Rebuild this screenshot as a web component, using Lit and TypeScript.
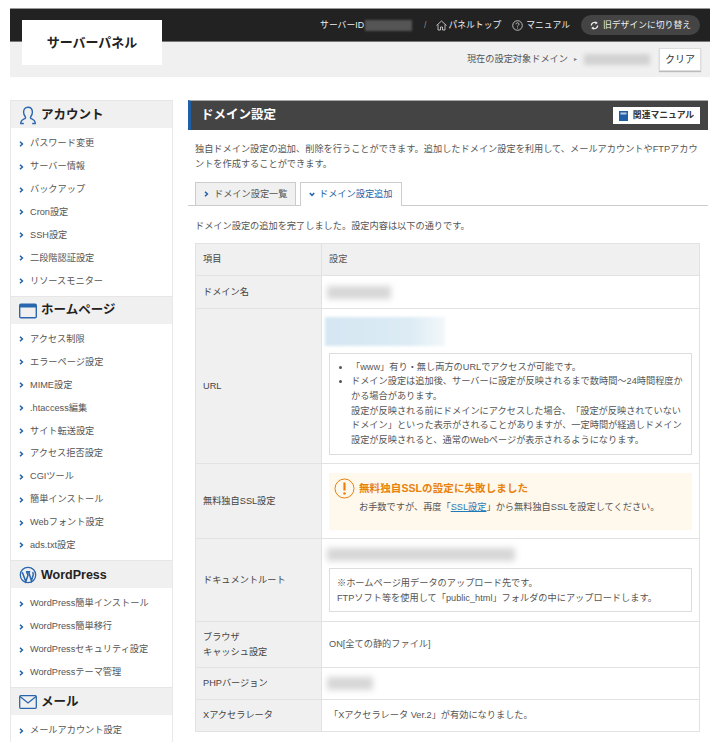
import { LitElement, html, css, svg } from "lit";
import { customElement } from "lit/decorators.js";

const chev = html`<svg class="chev" viewBox="0 0 5 6" width="5" height="6"><path d="M1 .8 3.4 3 1 5.2" fill="none" stroke="#1f5fa8" stroke-width="1.5"/></svg>`;
const down = html`<svg class="chev" viewBox="0 0 6 5" width="6" height="5"><path d="M.8 1 3 3.4 5.2 1" fill="none" stroke="#1f5fa8" stroke-width="1.5"/></svg>`;

const icons: Record<string, unknown> = {
  account: svg`<path d="M10 2.2c-3 0-4.400 2.300-4.400 5 0 2 .9 3.600 1.800 4.800.3.500.2 1.200-.4 1.500-1.400.9-3.400 1.200-4 3.300-.2.600-.2 1.200-.2 1.700h3M10 2.200c3 0 4.400 2.300 4.400 5 0 2-.9 3.600-1.800 4.800-.3.500-.2 1.200.4 1.500 1.400.9 3.400 1.200 4 3.300.2.600.2 1.200.2 1.700h-3" fill="none" stroke="#2a66ad" stroke-width="1.400"/>`,
  home: svg`<rect x="1.700" y="3.200" width="16.600" height="13.600" rx="1.200" fill="none" stroke="#2a66ad" stroke-width="1.400"/><rect x="2" y="3.500" width="16" height="3" fill="#2a66ad"/>`,
  wp: svg`<circle cx="10" cy="10" r="7.700" fill="none" stroke="#2a66ad" stroke-width="1.300"/><path d="M4.300 7.200 7.800 16.500 10 10.200 8.500 6.700M8 6.700h4.200M10.600 6.700l2.800 9 1.800-5.600c.3-1.300-.2-2.200-.6-3" fill="none" stroke="#2a66ad" stroke-width="1.500"/>`,
  mail: svg`<rect x="1.700" y="3.700" width="16.600" height="12.600" rx="1" fill="none" stroke="#2a66ad" stroke-width="1.300"/><path d="M2 4.500 10 11l8-6.500" fill="none" stroke="#2a66ad" stroke-width="1.300"/>`,
};

const menu = [
  { icon: "account", title: "アカウント", items: ["パスワード変更", "サーバー情報", "バックアップ", "Cron設定", "SSH設定", "二段階認証設定", "リソースモニター"] },
  { icon: "home", title: "ホームページ", items: ["アクセス制限", "エラーページ設定", "MIME設定", ".htaccess編集", "サイト転送設定", "アクセス拒否設定", "CGIツール", "簡単インストール", "Webフォント設定", "ads.txt設定"] },
  { icon: "wp", title: "WordPress", items: ["WordPress簡単インストール", "WordPress簡単移行", "WordPressセキュリティ設定", "WordPressテーマ管理"] },
  { icon: "mail", title: "メール", items: ["メールアカウント設定"] },
];

@customElement("app-root")
export class AppRoot extends LitElement {
  static styles = css`
    :host {
      display: block; width: 710px; height: 742px; overflow: hidden; background: #fff;
      font-family: "Liberation Sans", "Noto Sans CJK JP", sans-serif;
      font-size: 9.2px; color: #444; line-height: 15px; text-spacing-trim: space-all;
    }
    .page { padding: 8px 0 0 10px; }
    .head { position: relative; width: 700px; }
    .top {
      height: 34px; box-sizing: border-box; background: #222; border-top: 1px solid #999; border-bottom: 1px solid #777;
      display: flex; align-items: center; justify-content: flex-end; color: #eee; padding-right: 10px; font-size: 8.800px;
    }
    .logo {
      position: absolute; left: 12px; top: 12px; width: 140px; height: 45px; background: #fff;
      display: flex; align-items: center; justify-content: center;
      font-size: 13px; font-weight: 700; color: #222;
    }
    .sid { display: flex; align-items: center; }
    .blurdark { width: 47px; height: 11px; margin-left: 1px; background: #555; filter: blur(1px); }
    .slash { margin: 0 10px 0 12px; color: #888; }
    .tl { display: flex; align-items: center; gap: 1px; margin-right: 11px; }
    .tl.two { gap: 3px; }
    .sw {
      width: 119px; height: 20px; border-radius: 10px; background: #444; display: flex; align-items: center; justify-content: center; gap: 4px;
    }
    .sub {
      height: 35px; background: #f0f0f0; display: flex; align-items: center; justify-content: flex-end; color: #555; padding-right: 9px;
    }
    .arrow { margin: 0 7px 0 6px; font-size: 6px; color: #777; }
    .blurlight { width: 66px; height: 11px; background: #d2d2d2; filter: blur(2px); margin-right: 9px; }
    .clear {
      width: 42px; height: 23px; box-sizing: border-box; background: #fff; border: 1px solid #ddd; box-shadow: 0 1px 1px #bbb; color: #333;
      display: flex; align-items: center; justify-content: center; font-size: 10px;
    }
    .body { display: flex; margin-top: 23px; align-items: flex-start; }
    .side { width: 163px; box-sizing: border-box; border: 1px solid #e8e8e8; border-top: 0; flex: none; }
    .sh {
      height: 28px; background: #f0f0f0; display: flex; align-items: center; padding: 1px 0 0 7px; gap: 3px;
      font-size: 12.500px; font-weight: 700; color: #222; border-top: 1px solid #e6e6e6; box-sizing: border-box;
    }
    .sh svg { flex: none; }
    ul.nav { list-style: none; margin: 0; padding: 4.300px 0 3.200px; }
    ul.nav li { height: 22.900px; display: flex; align-items: center; gap: 6px; padding-left: 8px; color: #555; font-size: 9.200px; white-space: nowrap; }
    .chev { flex: none; }
    .main { width: 520px; margin-left: 15px; flex: none; }
    .title {
      height: 30px; box-sizing: border-box; background: #444; border-left: 3px solid #1f5fa8; border-top: 1px solid #aaa;
      display: flex; align-items: center; justify-content: space-between; padding: 0 8px 0 10px; color: #fff; font-size: 12.500px; font-weight: 700;
    }
    .rel {
      width: 87px; height: 17px; background: #fff; display: flex; align-items: center; justify-content: center; gap: 5px;
      color: #333; font-size: 8.800px; font-weight: 700;
    }
    .intro { margin: 12px 5px 0 7px; line-height: 15px; color: #555; }
    .tabs { display: flex; margin-top: 10px; padding-left: 7px; gap: 4px; border-bottom: 1px solid #ccc; height: 23px; }
    .tab {
      height: 23px; box-sizing: border-box; display: flex; align-items: center; gap: 5px; padding: 0 0 0 8px; border: 1px solid #ccc; border-bottom: 0;
      background: #f0f0f0; color: #555; width: 101px; white-space: nowrap;
    }
    .tab.on { background: #fff; height: 24px; color: #1f5fa8; width: 102px; gap: 4px; }
    .done { margin: 13px 7px 9px; color: #555; }
    table { border-collapse: collapse; width: 505px; margin-left: 7px; table-layout: fixed; }
    th, td { border: 1px solid #e2e2e2; font-weight: 400; text-align: left; padding: 0 7px; color: #555; vertical-align: middle; }
    th { width: 111px; background: #f0f0f0; color: #444; }
    td.hd { background: #f0f0f0; }
    .r1 { height: 32px; } .r2 { height: 33px; } .r3 { height: 155px; } .r4 { height: 75px; } .r5 { height: 83px; } .r6 { height: 46px; } .r7 { height: 32px; } .r8 { height: 32px; }
    .blur { height: 13px; background: #d6d6d6; filter: blur(3px); margin-left: -2px; }
    .urlb { width: 120px; height: 29px; margin-left: -4px; background: linear-gradient(90deg, #d5e6f2, #dcebf4 70%, #f2f7fa); filter: blur(1.500px); margin-bottom: 7px; }
    .note { border: 1px solid #ddd; padding: 6px 3px 7px 21px; }
    .note ul { margin: 0; padding: 0; list-style: disc; }
    .note li { line-height: 14.600px; }
    .note2 { border: 1px solid #ddd; margin: 7px 0 0 0; padding: 7px 7px; line-height: 14.500px; height: 44px; box-sizing: border-box; }
    .warn { background: #fff8ec; height: 57px; box-sizing: border-box; padding: 5px 5px; display: flex; gap: 4px; }
    .warn svg { flex: none; }
    .wt { color: #e8820e; font-weight: 700; font-size: 10.500px; line-height: 15px; margin-top: 3px; letter-spacing: .1px; }
    .wb { margin-top: 4px; color: #555; }
    a { color: #1f7ab8; text-decoration: underline; }
  `;

  render() {
    return html`<div class="page">
      <div class="head">
        <div class="top">
          <span class="sid">サーバーID<span class="blurdark"></span></span>
          <span class="slash">/</span>
          <span class="tl"><svg width="11" height="11" viewBox="0 0 11 11"><path d="M.5 5.500 5.500 1l5 4.500M2 4.500V10h2.500V7h2v3H9V4.500" fill="none" stroke="#ddd" stroke-width=".8"/></svg>パネルトップ</span>
          <span class="tl two"><svg width="11" height="11" viewBox="0 0 11 11"><circle cx="5.500" cy="5.500" r="4.800" fill="none" stroke="#ddd" stroke-width=".8"/><path d="M4 4.300c0-2 3-2 3 0 0 1-1.500 1-1.500 2.200" fill="none" stroke="#ddd" stroke-width=".8"/><circle cx="5.500" cy="8" r=".5" fill="#ddd"/></svg>マニュアル</span>
          <span class="sw"><svg width="9" height="9" viewBox="0 0 9 9"><path d="M1.300 4.500a3.200 3.200 0 0 1 5-2.600M7.700 4.500a3.200 3.200 0 0 1-5 2.600" fill="none" stroke="#eee" stroke-width="1.300"/><path d="M5.500.3 7.800 2 5.500 3.400zM3.500 8.700 1.200 7l2.300-1.400z" fill="#eee"/></svg>旧デザインに切り替え</span>
        </div>
        <div class="logo">サーバーパネル</div>
        <div class="sub">
          <span>現在の設定対象ドメイン</span><span class="arrow">▸</span>
          <span class="blurlight"></span>
          <span class="clear">クリア</span>
        </div>
      </div>
      <div class="body">
        <div class="side">
          ${menu.map((m) => html`
            <div class="sh"><svg width="20" height="20" viewBox="0 0 20 20">${icons[m.icon]}</svg><span>${m.title}</span></div>
            <ul class="nav">${m.items.map((i) => html`<li>${chev}<span>${i}</span></li>`)}</ul>`)}
        </div>
        <div class="main">
          <div class="title"><span>ドメイン設定</span>
            <span class="rel"><svg width="9" height="10" viewBox="0 0 9 10"><rect width="9" height="10" fill="#1f5fa8"/><rect x="1.500" y="1.500" width="6" height="2" fill="#bcd"/></svg>関連マニュアル</span>
          </div>
          <div class="intro">独自ドメイン設定の追加、削除を行うことができます。追加したドメイン設定を利用して、メールアカウントやFTPアカウントを作成することができます。</div>
          <div class="tabs">
            <div class="tab">${chev}ドメイン設定一覧</div>
            <div class="tab on">${down}ドメイン設定追加</div>
          </div>
          <div class="done">ドメイン設定の追加を完了しました。設定内容は以下の通りです。</div>
          <table>
            <tr class="r1"><th>項目</th><td class="hd">設定</td></tr>
            <tr class="r2"><th>ドメイン名</th><td><div class="blur" style="width:64px"></div></td></tr>
            <tr class="r3"><th>URL</th><td>
              <div class="urlb"></div>
              <div class="note"><ul>
                <li>「www」有り・無し両方のURLでアクセスが可能です。</li>
                <li>ドメイン設定は追加後、サーバーに設定が反映されるまで数時間～24時間程度かかる場合があります。<br>設定が反映される前にドメインにアクセスした場合、「設定が反映されていないドメイン」といった表示がされることがありますが、一定時間が経過しドメイン設定が反映されると、通常のWebページが表示されるようになります。</li>
              </ul></div>
            </td></tr>
            <tr class="r4"><th>無料独自SSL設定</th><td>
              <div class="warn">
                <svg width="21" height="21" viewBox="0 0 21 21"><circle cx="10.500" cy="10.500" r="9.500" fill="none" stroke="#e8820e" stroke-width="1"/><path d="M10.500 4.500v8" stroke="#e8820e" stroke-width="2.200"/><circle cx="10.500" cy="15.500" r="1.300" fill="#e8820e"/></svg>
                <div><div class="wt">無料独自SSLの設定に失敗しました</div>
                <div class="wb">お手数ですが、再度「<a>SSL設定</a>」から無料独自SSLを設定してください。</div></div>
              </div>
            </td></tr>
            <tr class="r5"><th>ドキュメントルート</th><td>
              <div class="blur" style="width:188px"></div>
              <div class="note2">※ホームページ用データのアップロード先です。<br>FTPソフト等を使用して「public_html」フォルダの中にアップロードします。</div>
            </td></tr>
            <tr class="r6"><th>ブラウザ<br>キャッシュ設定</th><td>ON[全ての静的ファイル]</td></tr>
            <tr class="r7"><th>PHPバージョン</th><td><div class="blur" style="width:46px"></div></td></tr>
            <tr class="r8"><th>Xアクセラレータ</th><td>「Xアクセラレータ Ver.2」が有効になりました。</td></tr>
          </table>
        </div>
      </div>
    </div>`;
  }
}
